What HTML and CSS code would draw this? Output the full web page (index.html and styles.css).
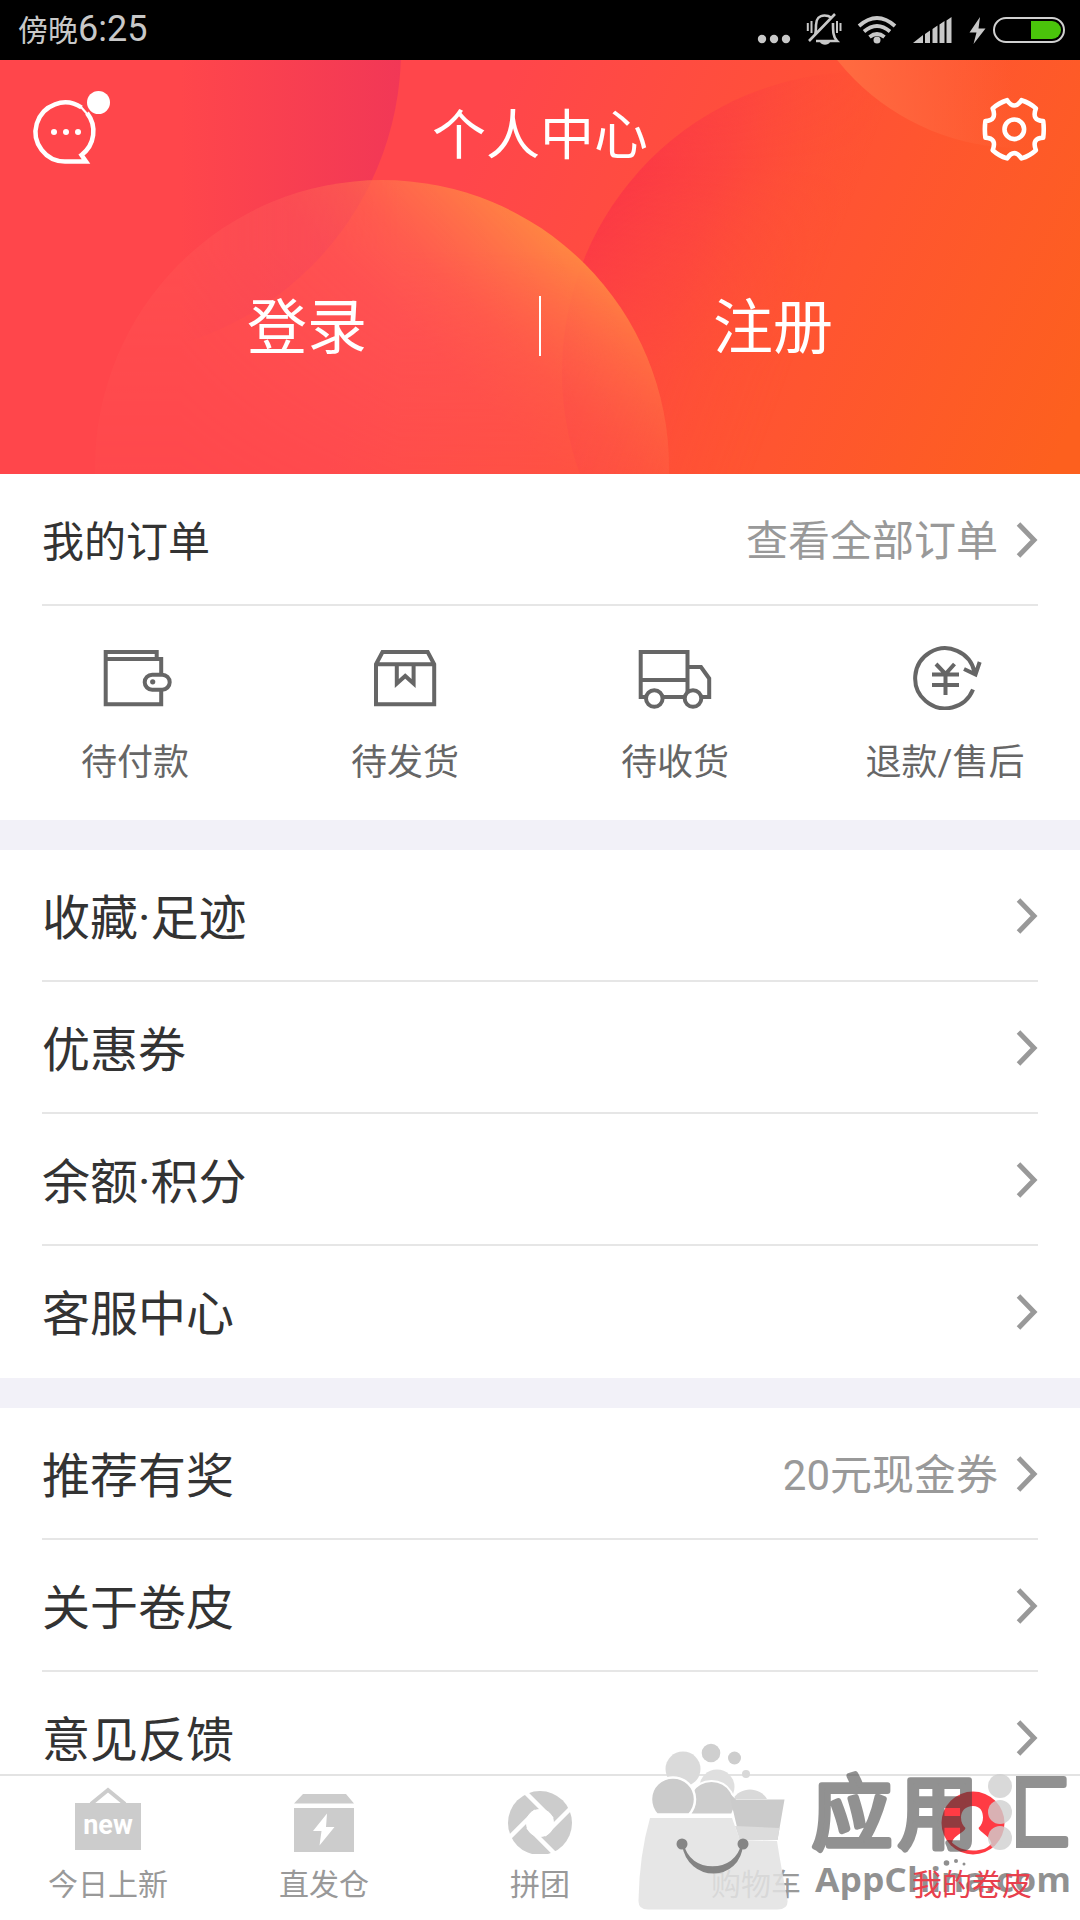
FILE: index.html
```html
<!DOCTYPE html>
<html lang="zh-CN">
<head>
  <meta charset="UTF-8">
  <title>个人中心</title>
  <link rel="stylesheet" href="styles.css">
</head>
<body>
  <div class="app">
    <div class="status-bar">
      <div class="time"><span class="period">傍晚</span>6:25</div>
      <svg width="330" height="60" viewBox="750 0 330 60" fill="#c8c8c8">
        <circle cx="762" cy="39" r="4.2"/><circle cx="774" cy="39" r="4.2"/><circle cx="786" cy="39" r="4.2"/>
        <g fill="none" stroke="#c8c8c8" stroke-width="2.6">
          <path d="M815 35c1-3 1-7 1-10 0-6 3.500-9.500 8.500-9.500 3 0 5 .8 6.500 2M833 23c0 8 0 14 4 18H816M809 41l26-27"/>
          <path d="M811.500 21v12M807.800 23v8M837 21v12M840.500 23v8" stroke-width="2"/>
        </g>
        <path d="M820 42h10c-1.500 3.500-8.500 3.500-10 0z"/>
        <g fill="none" stroke="#c8c8c8" stroke-width="3.8">
          <path d="M859 26q18-16 36 0M864 31.500q13-11 26 0M869.500 37q7.500-6 15 0"/>
        </g>
        <circle cx="877" cy="40" r="3.500"/>
        <path d="M913 43l10-8v8zM925 34l5-3.500V43h-5zM932.500 29l5-3.500V43h-5zM939.500 24.500l5-3.500v22h-5zM946.500 20.500l5-3.500v26h-5z"/>
        <path d="M980 17l-10.500 15.500h7L973.500 44 985.500 28.500h-7z"/>
        <rect x="994" y="18" width="70" height="24" rx="12" fill="none" stroke="#d0d0d0" stroke-width="2"/>
        <path d="M1031 21h21a9 9 0 0 1 0 18h-21z" fill="#4ac40b"/>
      </svg>
    </div>

    <div class="header">
      <svg class="header-bg" width="1080" height="414" viewBox="0 60 1080 414">
        <defs>
          <linearGradient id="base" gradientUnits="userSpaceOnUse" x1="450" y1="200" x2="1050" y2="474">
            <stop offset="0" stop-color="#ff464b"/><stop offset=".6" stop-color="#ff5530"/><stop offset="1" stop-color="#fd601e"/>
          </linearGradient>
          <linearGradient id="pink" gradientUnits="userSpaceOnUse" x1="180" y1="0" x2="400" y2="0">
            <stop offset="0" stop-color="#ee3459" stop-opacity="0"/><stop offset="1" stop-color="#ee3459" stop-opacity=".8"/>
          </linearGradient>
          <linearGradient id="red" gradientUnits="userSpaceOnUse" x1="580" y1="170" x2="830" y2="260">
            <stop offset="0" stop-color="#fa3148"/><stop offset=".5" stop-color="#fc3f41" stop-opacity=".65"/><stop offset="1" stop-color="#ff5530" stop-opacity="0"/>
          </linearGradient>
          <linearGradient id="redFade" x1="0" y1="0" x2="0" y2="1">
            <stop offset="0" stop-color="#fff" stop-opacity=".7"/><stop offset=".25" stop-color="#fff"/><stop offset=".75" stop-color="#fff" stop-opacity=".4"/>
          </linearGradient>
          <mask id="redMask"><rect x="560" y="60" width="520" height="414" fill="url(#redFade)"/></mask>
          <linearGradient id="orange" gradientUnits="userSpaceOnUse" x1="430" y1="350" x2="550" y2="225">
            <stop offset="0" stop-color="#ff5c58" stop-opacity=".6"/><stop offset=".35" stop-color="#ff6650" stop-opacity=".7"/><stop offset="1" stop-color="#ff8742"/>
          </linearGradient>
          <linearGradient id="orangeFade" gradientUnits="userSpaceOnUse" x1="180" y1="0" x2="400" y2="0">
            <stop offset="0" stop-color="#fff" stop-opacity=".5"/><stop offset="1" stop-color="#fff"/>
          </linearGradient>
          <linearGradient id="orangeDown" gradientUnits="userSpaceOnUse" x1="0" y1="250" x2="0" y2="474">
            <stop offset="0" stop-color="#000" stop-opacity="0"/><stop offset="1" stop-color="#000" stop-opacity=".6"/>
          </linearGradient>
          <mask id="orangeMask">
            <rect y="60" width="1080" height="414" fill="url(#orangeFade)"/>
            <rect y="60" width="1080" height="414" fill="url(#orangeDown)"/>
          </mask>
          <linearGradient id="corner" gradientUnits="userSpaceOnUse" x1="850" y1="80" x2="1010" y2="60">
            <stop offset="0" stop-color="#ff6a40"/><stop offset="1" stop-color="#ff6a40" stop-opacity="0"/>
          </linearGradient>
        </defs>
        <rect y="60" width="1080" height="414" fill="url(#base)"/>
        <circle cx="95" cy="50" r="306" fill="url(#pink)"/>
        <g mask="url(#redMask)"><circle cx="862" cy="372" r="300" fill="url(#red)"/></g>
        <g mask="url(#orangeMask)"><circle cx="382" cy="467" r="287" fill="url(#orange)"/></g>
        <circle cx="1020" cy="-86" r="234" fill="url(#corner)"/>
      </svg>
      <div class="nav">
        <svg width="120" height="148" viewBox="0 60 120 148">
          <path d="M81.500 107.500A29.500 29.500 0 1 0 65.600 161.500H86l-4.500-6.500A29.500 29.500 0 0 0 87 113" fill="none" stroke="#fff" stroke-width="4.500"/>
          <path d="M81 107l7 8" stroke="#fff" stroke-width="2"/>
          <g fill="#fff">
            <circle cx="98.500" cy="102.500" r="11.500"/>
            <circle cx="54" cy="132" r="3"/><circle cx="66" cy="132" r="3"/><circle cx="78" cy="132" r="3"/>
          </g>
        </svg>
        <h1>个人中心</h1>
        <svg width="120" height="148" viewBox="960 60 120 148">
          <g transform="translate(1014.300 129.300)" fill="none" stroke="#fff" stroke-width="4.600" stroke-linejoin="round">
            <path d="M28.900-8.300Q30 0 28.900 8.300 17 8.800 21.600 20.900 15.500 26.500 7.200 29.100 0 18.500-7.200 29.100-15.500 26.500-21.600 20.900-17 8.800-28.900 8.300-30 0-28.900-8.300-17-8.800-21.600-20.900-15.500-26.500-7.200-29.100 0-18.500 7.200-29.100 15.500-26.500 21.600-20.900 17-8.800 28.900-8.300z"/>
            <circle r="9.800"/>
          </g>
        </svg>
      </div>
      <div class="auth">
        <a class="auth-link">登录</a>
        <span class="auth-line"></span>
        <a class="auth-link">注册</a>
      </div>
    </div>

    <div class="content">
      <div class="section">
        <div class="row row-order">
          <span>我的订单</span>
          <span class="hint">查看全部订单</span>
          <svg class="arrow" width="22" height="40" viewBox="0 0 22 40"><path d="M2.500 4l15.500 16L2.500 36"/></svg>
        </div>
        <div class="orders">
          <div class="order">
            <svg width="80" height="64" viewBox="95 646 80 64">
              <path d="M105.700 659V652h51v7M105.700 659h55.500v45.300h-55.500z"/>
              <rect x="144.700" y="674.700" width="25" height="15" rx="7.500" fill="#fff"/>
              <circle class="solid" cx="152.700" cy="681.800" r="2.600"/>
            </svg>
            <span>待付款</span>
          </div>
          <div class="order">
            <svg width="80" height="64" viewBox="365 646 80 64">
              <path d="M376 664.300L382.500 652h45.200l6.500 12.300v40H376zM376 664.300h58.200M396.800 665v18.500l8.400-7.500 8.400 7.500V665"/>
            </svg>
            <span>待发货</span>
          </div>
          <div class="order">
            <svg width="80" height="64" viewBox="635 646 80 64">
              <path d="M640.700 697V652h46.800v45zM640.700 680h46.800M687.500 667h13.500l8.200 11.500V697h-22"/>
              <circle cx="654.300" cy="698.500" r="8.300" fill="#fff"/><circle cx="693" cy="698.500" r="8.300" fill="#fff"/>
            </svg>
            <span>待收货</span>
          </div>
          <div class="order">
            <svg width="80" height="64" viewBox="905 646 80 64">
              <path d="M973 689.500A30 30 0 1 1 974.500 672M964 669l11.500 5.500 4.200-12.500"/>
              <path d="M936 664l9.500 10 9-10M932 674.500h27M932 685h27M945.500 674v21"/>
            </svg>
            <span>退款/售后</span>
          </div>
        </div>
      </div>

      <div class="section">
        <div class="row"><span>收藏·足迹</span><svg class="arrow" width="22" height="40" viewBox="0 0 22 40"><path d="M2.500 4l15.500 16L2.500 36"/></svg></div>
        <div class="row"><span>优惠券</span><svg class="arrow" width="22" height="40" viewBox="0 0 22 40"><path d="M2.500 4l15.500 16L2.500 36"/></svg></div>
        <div class="row"><span>余额·积分</span><svg class="arrow" width="22" height="40" viewBox="0 0 22 40"><path d="M2.500 4l15.500 16L2.500 36"/></svg></div>
        <div class="row"><span>客服中心</span><svg class="arrow" width="22" height="40" viewBox="0 0 22 40"><path d="M2.500 4l15.500 16L2.500 36"/></svg></div>
      </div>

      <div class="section">
        <div class="row"><span>推荐有奖</span><span class="hint">20元现金券</span><svg class="arrow" width="22" height="40" viewBox="0 0 22 40"><path d="M2.500 4l15.500 16L2.500 36"/></svg></div>
        <div class="row"><span>关于卷皮</span><svg class="arrow" width="22" height="40" viewBox="0 0 22 40"><path d="M2.500 4l15.500 16L2.500 36"/></svg></div>
        <div class="row"><span>意见反馈</span><svg class="arrow" width="22" height="40" viewBox="0 0 22 40"><path d="M2.500 4l15.500 16L2.500 36"/></svg></div>
      </div>
    </div>

    <div class="tab-bar">
      <div class="tab">
        <svg width="80" height="68" viewBox="68 1786 80 68">
          <path d="M91 1804l17-14 17 14" fill="none" stroke="#ccc" stroke-width="4"/>
          <rect x="75" y="1803" width="66" height="47" fill="#ccc"/>
          <text class="new" x="108" y="1834" text-anchor="middle">new</text>
        </svg>
        <span>今日上新</span>
      </div>
      <div class="tab">
        <svg width="80" height="68" viewBox="284 1786 80 68" fill="#ccc">
          <path d="M303 1794h43l8 9.500h-60zM294 1808h60v44h-60z"/>
          <path d="M327 1813.500l-14 17.500h8.500l-2 14.500 15-18.500h-8.500z" fill="#fff"/>
        </svg>
        <span>直发仓</span>
      </div>
      <div class="tab">
        <svg width="80" height="68" viewBox="-40 -37 80 68">
          <circle r="32" fill="#ccc"/>
          <circle r="14" fill="#fff"/>
          <path d="M-15.500-31.500L12-4M31.500-15.500L4 12M15.500 31.500L-12 4M-31.500 15.500L-4-12" stroke="#fff" stroke-width="4.500"/>
        </svg>
        <span>拼团</span>
      </div>
      <div class="tab">
        <svg width="80" height="68" viewBox="0 0 80 68"></svg>
        <span>购物车</span>
      </div>
      <div class="tab active">
        <svg width="80" height="70" viewBox="932 1786 80 70">
          <circle cx="973" cy="1823" r="31.500" fill="#ff3b44"/>
          <path d="M973 1806c-7.500 0-12 5-12 11.500 0 5 2 8 4.500 10.500-1 5-12 7-13.500 14.500 5 5 12 8 21 8s14-2 18.500-7c-2-8-11.500-11-13-15.500 3-3 4.500-6 4.500-10.500 0-6.500-3-11.500-10-11.500z" fill="#fff"/>
        </svg>
        <span>我的卷皮</span>
      </div>
    </div>

    <svg class="badge" width="450" height="180" viewBox="630 1735 450 180">
      <circle cx="683" cy="1769" r="17.500" fill="#dadada"/>
      <circle cx="711" cy="1753" r="9.300" fill="#cfcfcf"/>
      <circle cx="734.500" cy="1758" r="6.500" fill="#cdcdcd"/>
      <circle cx="746" cy="1774" r="4" fill="#d8d8d8"/>
      <circle cx="717" cy="1787" r="17.500" fill="#dfdfdf"/>
      <path d="M733 1799a20 20 0 0 1 34 0z" fill="#d9d9d9"/>
      <path d="M691 1814.500a23 23 0 1 1 41 0z" fill="#cdcdcd" stroke="#fff" stroke-width="2"/>
      <path d="M657 1814.500a22 22 0 1 1 32 0z" fill="#cbcbcb" stroke="#fff" stroke-width="2.500"/>
      <path d="M650 1818h82l8 22 37 1c3 20 7 40 10.500 59q1 9.500-10 9.500H648q-10 0-9.500-9.500 1-46 11.500-82z" fill="#e2e2e2" fill-opacity=".86"/>
      <path d="M729 1793l7 6.500h48.500l-7 40.500H740z" fill="#cbcbcb"/>
      <path d="M735 1826l44.500 2-2 12H740z" fill="#dcdcdc"/>
      <path d="M683 1844c5 31 54 31 59 0-2 38-54 38-59 0z" fill="#848484" stroke="#848484" stroke-width="2"/>
      <circle cx="682" cy="1844" r="5.500" fill="#858585"/><circle cx="743" cy="1844" r="5.500" fill="#858585"/>
      <clipPath id="hui"><rect x="1016" y="1760" width="64" height="100"/></clipPath>
      <g class="badge-name">
        <text x="812" y="1842">应</text>
        <text x="898" y="1842">用</text>
        <text x="989" y="1842" clip-path="url(#hui)">汇</text>
      </g>
      <g fill="#d0d0d0" fill-opacity=".8">
        <circle cx="1000" cy="1786" r="12"/><circle cx="1000" cy="1812" r="12"/><circle cx="1000" cy="1838" r="12"/>
      </g>
      <g fill="#8f8f8f">
        <circle cx="946.500" cy="1863" r="2.800"/><circle cx="956" cy="1861" r="2"/><circle cx="964" cy="1864" r="1.500"/>
      </g>
      <text class="badge-site" x="815" y="1892" textLength="256" lengthAdjust="spacingAndGlyphs">AppChina.com</text>
    </svg>
  </div>
</body>
</html>
```
FILE: styles.css
```css
body {
  margin: 0;
  background: #fff;
  font-family: Roboto, 'Noto Sans CJK SC', sans-serif;
  color: #333;
}

svg {
  display: block;
  flex-shrink: 0;
}

.app {
  position: relative;
  width: 1080px;
  height: 1920px;
  display: flex;
  flex-direction: column;
  overflow: hidden;
}

.status-bar {
  height: 60px;
  flex-shrink: 0;
  background: #000;
  color: #c8c8c8;
  display: flex;
  align-items: center;
  justify-content: space-between;
}

.time {
  padding-left: 18px;
  font-size: 36px;
  line-height: 60px;
}

.period {
  font-size: 30px;
}

/* header */
.header {
  position: relative;
  height: 414px;
  flex-shrink: 0;
  color: #fff;
}

.header-bg {
  position: absolute;
  top: 0;
  left: 0;
}

.nav {
  position: relative;
  height: 148px;
  display: flex;
  align-items: center;
  justify-content: space-between;
}

h1 {
  margin: 0;
  padding-top: 5px;
  font-size: 54px;
  font-weight: 400;
  line-height: 1;
}

.auth {
  position: relative;
  height: 236px;
  padding: 0 75px;
  display: flex;
  align-items: center;
}

.auth-link {
  flex: 1;
  padding-top: 5px;
  text-align: center;
  font-size: 60px;
  line-height: 1;
}

.auth-line {
  width: 2px;
  height: 60px;
  background: #fff;
}

/* lists */
.content {
  flex: 1;
  min-height: 0;
  overflow: hidden;
  background: #f2f1f8;
}

.section {
  background: #fff;
  padding: 0 42px;
  margin-bottom: 30px;
}

.row {
  height: 132px;
  box-sizing: border-box;
  border-bottom: 2px solid #e6e6e6;
  display: flex;
  align-items: center;
  font-size: 48px;
}

.row span {
  padding-bottom: 2px;
}

.section .row:last-child {
  border-bottom-color: transparent;
}

.row-order {
  font-size: 42px;
}

.row .hint {
  margin-left: auto;
  padding-bottom: 3px;
  font-size: 42px;
  color: #999;
}

.arrow {
  margin-left: auto;
  padding-top: 1px;
  fill: none;
  stroke: #999;
  stroke-width: 5;
}

.hint + .arrow {
  margin-left: 18px;
}

.orders {
  height: 214px;
  margin: 0 -42px;
  display: grid;
  grid-template-columns: repeat(4, 1fr);
}

.order {
  padding-top: 40px;
  display: flex;
  flex-direction: column;
  align-items: center;
  gap: 35px;
  font-size: 36px;
  line-height: 36px;
  color: #666;
}

.order svg {
  fill: none;
  stroke: #666;
  stroke-width: 4;
}

.order .solid {
  fill: #666;
  stroke: none;
}

/* bottom tabs */
.tab-bar {
  height: 146px;
  box-sizing: border-box;
  border-top: 2px solid #e3e3e3;
  background: #fff;
  flex-shrink: 0;
  display: grid;
  grid-template-columns: repeat(5, 1fr);
}

.tab {
  padding-top: 10px;
  display: flex;
  flex-direction: column;
  align-items: center;
  gap: 16px;
  font-size: 30px;
  line-height: 30px;
  color: #999;
}

.new {
  font-weight: 700;
  font-size: 27px;
  fill: #fff;
}

.active {
  gap: 14px;
}

.active span {
  position: relative;
  z-index: 2;
  color: #e8404c;
}

/* floating logo over the tabs */
.badge {
  position: absolute;
  left: 630px;
  top: 1735px;
  z-index: 1;
}

.badge-name {
  font-size: 80px;
  font-weight: 400;
  fill: #3c3c3c;
  stroke: #3c3c3c;
  stroke-width: 6;
  stroke-linejoin: round;
  opacity: .56;
}

.badge-site {
  font-family: 'Open Sans', sans-serif;
  font-size: 34px;
  font-weight: 700;
  fill: #3c3c3c;
  fill-opacity: .56;
}
```
